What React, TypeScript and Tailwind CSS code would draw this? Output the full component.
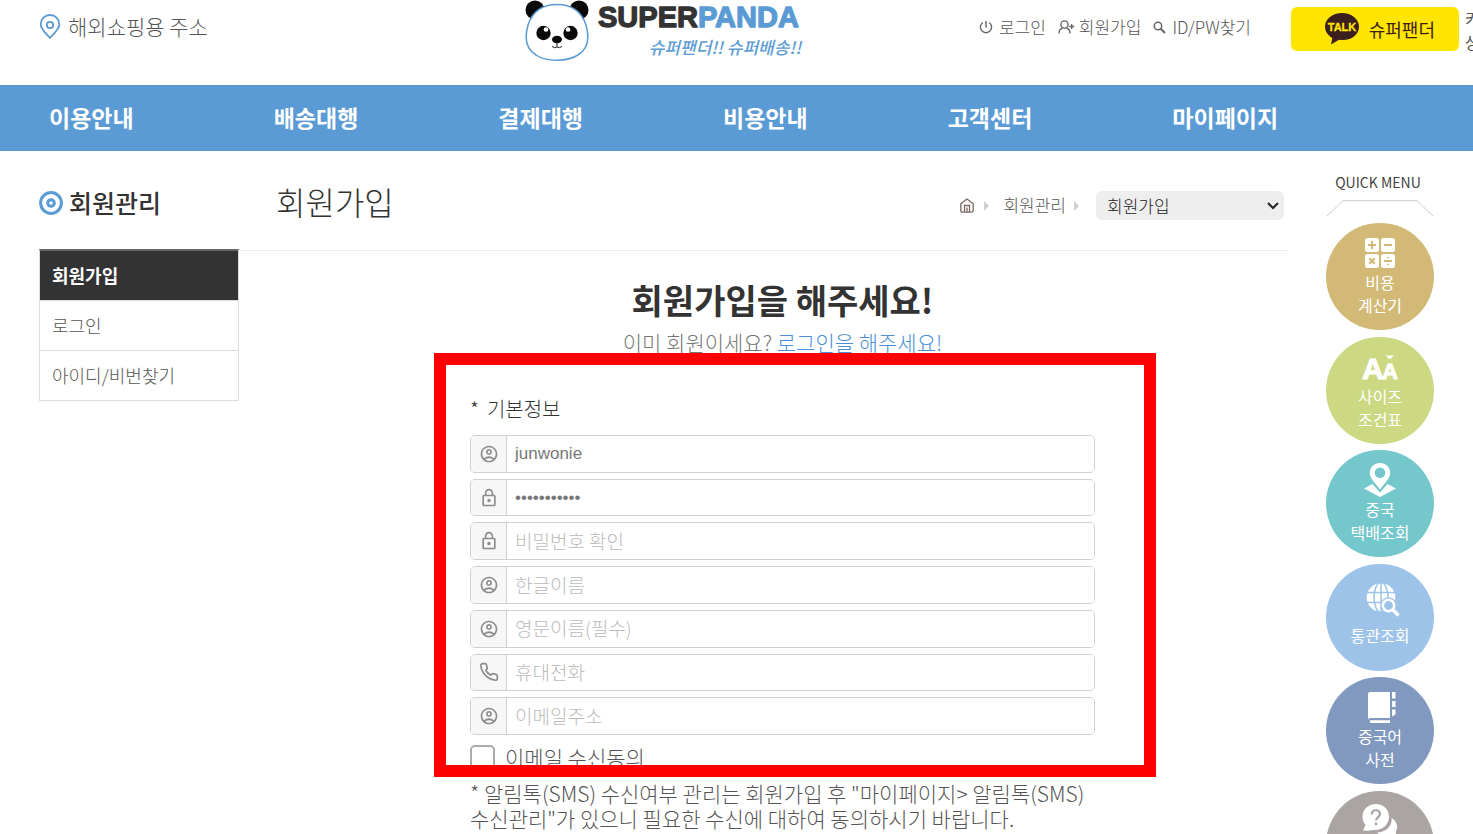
import type { ReactNode } from "react";
import { MdLockOutline, MdOutlineAccountCircle } from "react-icons/md";
import { FiPhone } from "react-icons/fi";

const navItems = ["이용안내", "배송대행", "결제대행", "비용안내", "고객센터", "마이페이지"];

type Field = {
  id: string;
  label: string;
  icon: "user" | "lock" | "phone";
  type: string;
  value?: string;
};

const fields: Field[] = [
  { id: "userid", label: "아이디", icon: "user", type: "text", value: "junwonie" },
  { id: "password", label: "비밀번호", icon: "lock", type: "password", value: "abcdefghijk" },
  { id: "password2", label: "비밀번호 확인", icon: "lock", type: "password" },
  { id: "name-ko", label: "한글이름", icon: "user", type: "text" },
  { id: "name-en", label: "영문이름(필수)", icon: "user", type: "text" },
  { id: "phone", label: "휴대전화", icon: "phone", type: "tel" },
  { id: "email", label: "이메일주소", icon: "user", type: "email" },
];

function PandaLogo() {
  return (
    <svg width="278" height="62" viewBox="0 0 278 62" role="img" aria-label="SUPERPANDA">
      <circle cx="10" cy="10" r="9.5" fill="#0a0a0a" />
      <circle cx="54" cy="10" r="9.5" fill="#0a0a0a" />
      <path
        d="M32 4.500C48 4.500 57 13 61 25C65 39 63 49 53 55C42 62 21 62 11 55C1 49-1 39 3 25C7 13 16 4.500 32 4.500Z"
        fill="#fff"
        stroke="#5b9bd5"
        strokeWidth="1.500"
      />
      <circle cx="18.500" cy="33" r="7.200" fill="#0a0a0a" />
      <circle cx="45.500" cy="33" r="7.200" fill="#0a0a0a" />
      <circle cx="21" cy="29.500" r="2.300" fill="#fff" />
      <circle cx="43" cy="29.500" r="2.300" fill="#fff" />
      <ellipse cx="32" cy="39.500" rx="5" ry="3.800" fill="#0a0a0a" />
      <path d="M32 43V47M27 46.500Q29.500 48.500 32 47Q34.500 48.500 37 46.500" fill="none" stroke="#222" strokeWidth="1" />
      <g
        fontFamily="Liberation Sans, sans-serif"
        fontWeight="700"
        fontSize="29"
        strokeWidth="1.300"
        strokeLinejoin="round"
      >
        <text x="73" y="27">
          <tspan fill="#333" stroke="#333">SUPER</tspan>
          <tspan fill="#5b9bd5" stroke="#5b9bd5">PANDA</tspan>
        </text>
      </g>
      <text
        x="276"
        y="54"
        textAnchor="end"
        fontFamily="Noto Sans CJK KR, sans-serif"
        fontSize="17"
        fontWeight="500"
        fontStyle="italic"
        fill="#5b9bd5"
      >
        슈퍼팬더!! 슈퍼배송!!
      </text>
    </svg>
  );
}

function PinIcon() {
  return (
    <svg width="22" height="26" viewBox="0 0 22 26" fill="none" stroke="#5b9bd5" strokeWidth="1.800">
      <path d="M11 24C8 20.500 1.700 15.500 1.700 10.300A9.300 9.300 0 0 1 20.300 10.300C20.300 15.500 14 20.500 11 24Z" strokeLinejoin="round" />
      <circle cx="11" cy="11" r="3.200" />
    </svg>
  );
}

function PowerIcon() {
  return (
    <svg width="14" height="14" viewBox="0 0 14 14" fill="none" stroke="#666" strokeWidth="1.400">
      <path d="M3.800 2.500A5.600 5.600 0 1 0 10.200 2.500M7 1V7.500" />
    </svg>
  );
}

function UserPlusIcon() {
  return (
    <svg width="17" height="14" viewBox="0 0 17 14" fill="none" stroke="#666" strokeWidth="1.400">
      <circle cx="6.500" cy="4.500" r="3.600" />
      <path d="M1 13.500C1 10.500 2.500 8.800 4.500 8.200M8.500 8.200C10.500 8.800 12 10.500 12 13.500M11.200 6.500H16.200M13.700 4V9" />
    </svg>
  );
}

function SearchIcon() {
  return (
    <svg width="13" height="13" viewBox="0 0 13 13" fill="none" stroke="#666">
      <circle cx="5" cy="5" r="3.700" strokeWidth="1.500" />
      <path d="M7.700 7.700L12 12" strokeWidth="2" />
    </svg>
  );
}

function TalkIcon() {
  return (
    <svg width="34" height="32" viewBox="0 0 34 32">
      <path
        d="M17 0C7.600 0 0 5.900 0 13.500C0 18.400 3 22.500 7.300 25L6 31.500L14 26.800C26 28.500 34 21.700 34 13.500C34 5.900 26.400 0 17 0Z"
        fill="#3b1e1e"
      />
      <text
        x="17"
        y="18"
        textAnchor="middle"
        fontFamily="Liberation Sans, sans-serif"
        fontSize="11"
        fontWeight="700"
        fill="#ffe500"
        stroke="#ffe500"
        strokeWidth="0.300"
      >
        TALK
      </text>
    </svg>
  );
}

function TargetIcon() {
  return (
    <svg width="24" height="24" viewBox="0 0 24 24" fill="none" stroke="#5b9bd5" strokeWidth="3">
      <circle cx="12" cy="12" r="10.400" />
      <circle cx="12" cy="12" r="3.300" />
    </svg>
  );
}

function HomeIcon() {
  return (
    <svg width="14" height="15" viewBox="0 0 14 15" fill="none" stroke="#7a6a62" strokeWidth="1.300">
      <path d="M.8 5.800L7 1L13.200 5.800V12.500Q13.200 14.200 11.500 14.200H2.500Q.8 14.200 .8 12.500Z" strokeLinejoin="round" />
      <path d="M4.500 14V7.500H9.500V14M7 9.500V14" />
    </svg>
  );
}

function Arrow() {
  return (
    <svg width="5" height="10" viewBox="0 0 5 10" fill="#d0d0d0">
      <path d="M0 0L5 5L0 10Z" />
    </svg>
  );
}

function CalcIcon() {
  return (
    <svg width="30" height="30" viewBox="0 0 30 30">
      <g fill="#fff">
        <rect width="14" height="14" rx="2.500" />
        <rect x="16" width="14" height="14" rx="2.500" />
        <rect y="16" width="14" height="14" rx="2.500" />
        <rect x="16" y="16" width="14" height="14" rx="2.500" />
      </g>
      <g stroke="#d2ba76" strokeWidth="2" fill="#d2ba76">
        <path d="M3 7H11M7 3V11M19 7H27M4.200 20.200L9.800 25.800M9.800 20.200L4.200 25.800M19 23H27" />
        <circle cx="23" cy="19.700" r=".5" strokeWidth="1" />
        <circle cx="23" cy="26.300" r=".5" strokeWidth="1" />
      </g>
    </svg>
  );
}

function SizeIcon() {
  return (
    <svg width="36" height="28" viewBox="0 0 36 28" fill="#fff">
      <g fontFamily="Liberation Sans, sans-serif" fontWeight="700" stroke="#fff" strokeWidth="1">
        <text x="0" y="26" fontSize="30">A</text>
        <text x="20" y="26" fontSize="22">A</text>
      </g>
      <path d="M23.500 2.500H32L27.700 6.500Z" />
    </svg>
  );
}

function TrackIcon() {
  return (
    <svg width="32" height="34" viewBox="0 0 32 34" fill="#fff">
      <path d="M8.500 21L0 25.500L16 34L32 25.500L23.500 21L16 29.500Z" />
      <path
        fillRule="evenodd"
        d="M16 0C10.200 0 5.800 4.300 5.800 9.800C5.800 15.500 11.500 20.500 16 26.500C20.500 20.500 26.200 15.500 26.200 9.800C26.200 4.300 21.800 0 16 0ZM16 4.500A5.300 5.300 0 1 1 16 15.100A5.300 5.300 0 0 1 16 4.500Z"
      />
    </svg>
  );
}

function GlobeIcon() {
  return (
    <svg width="28" height="34" viewBox="0 0 28 34" fill="none" overflow="visible">
      <circle cx="15" cy="14.500" r="14.300" fill="#fff" />
      <g stroke="#9dc3e8" strokeWidth="1.500">
        <path d="M0 9.500H30M0 19.500H30M15 0V29" />
        <ellipse cx="15" cy="14.500" rx="7" ry="15" />
      </g>
      <circle cx="22.500" cy="22.500" r="8.300" fill="#9dc3e8" />
      <circle cx="22.500" cy="22.500" r="5.700" stroke="#fff" strokeWidth="2.600" />
      <path d="M26.800 26.800L32.500 32.500" stroke="#fff" strokeWidth="3.500" />
    </svg>
  );
}

function BookIcon() {
  return (
    <svg width="24" height="31" viewBox="0 0 24 31" fill="#fff" overflow="visible">
      <path d="M2 0H22V26H3Q0 26 0 28V2Q0 0 2 0Z" />
      <path d="M2 28.300H22V31H3Q1 31 2 28.300ZM24 0H27.500V6.500H24ZM24 9H27.500V15H24ZM24 17.500H27.500V22.500L24 24.500Z" />
    </svg>
  );
}

function QuestionIcon() {
  return (
    <svg width="36" height="34" viewBox="0 0 36 34" fill="#fff">
      <path d="M14 0C6 0 .5 5.500 .5 13C.5 16.500 2 19.500 3.500 21L1 26.500Q8 27 11 26C20 27 27 20.500 27 13C27 5.500 21.500 0 14 0Z" />
      <path d="M29.500 14C30.500 21 25 28 15 28.500C19 33 26 34 29 32.500L35.500 33.500L33.500 28C36.500 23.500 35.500 17.500 29.500 14Z" />
      <path d="M9.800 10.500C9.800 4.800 18 5 18 10C18 13 14 13.200 14 16.500" fill="none" stroke="#aaa5a2" strokeWidth="2.200" />
      <circle cx="14" cy="20" r="1.400" fill="#aaa5a2" />
    </svg>
  );
}

type Quick = { lines: string[]; color: string; icon: ReactNode };

const quickMenu: Quick[] = [
  { lines: ["비용", "계산기"], color: "bg-[#d2ba76]", icon: <CalcIcon /> },
  { lines: ["사이즈", "조건표"], color: "bg-[#ccd882]", icon: <SizeIcon /> },
  { lines: ["중국", "택배조회"], color: "bg-[#74c7ca]", icon: <TrackIcon /> },
  { lines: ["통관조회"], color: "bg-[#9dc3e8]", icon: <GlobeIcon /> },
  { lines: ["중국어", "사전"], color: "bg-[#8199bf]", icon: <BookIcon /> },
  { lines: [], color: "bg-[#aaa5a2]", icon: <QuestionIcon /> },
];

function FieldIcon({ kind }: { kind: Field["icon"] }) {
  if (kind === "lock") return <MdLockOutline size={20} />;
  if (kind === "phone") return <FiPhone size={20} />;
  return <MdOutlineAccountCircle size={20} />;
}

export default function App() {
  return (
    <div className="h-screen overflow-hidden bg-white font-['Noto_Sans_CJK_KR',sans-serif] font-light text-[#555]">
      <header className="flex h-[85px] items-start pl-[39px]">
        <div className="grid flex-1 grid-cols-[1fr_auto_1fr] items-start">
          <a href="#address" className="flex h-[54px] items-center gap-[7px] text-[21px]">
            <PinIcon />
            해외쇼핑용 주소
          </a>
          <a href="#home">
            <PandaLogo />
          </a>
          <div className="flex h-[54px] items-center justify-end gap-3 pr-[37px] text-[17px]">
            <a href="#login" className="flex items-center gap-1.5">
              <PowerIcon />
              로그인
            </a>
            <a href="#join" className="flex items-center gap-1">
              <UserPlusIcon />
              회원가입
            </a>
            <a href="#find" className="flex items-center gap-1.5">
              <SearchIcon />
              ID/PW찾기
            </a>
          </div>
        </div>
        <a
          href="#talk"
          className="mt-[7px] ml-[3px] flex h-11 w-[168px] items-center justify-end gap-2.5 rounded-md bg-[#ffe500] pr-6 text-lg font-normal text-[#3b1e1e]"
        >
          <TalkIcon />
          슈퍼팬더
        </a>
        <p className="mt-1.5 ml-1.5 w-2 overflow-hidden text-base leading-6 font-normal whitespace-nowrap">
          카
          <br />
          상
        </p>
      </header>

      <nav className="grid h-[66px] grid-cols-6 items-center bg-[#5b9bd5] pr-[86px] pb-0.5 pl-[39px] text-[23px] font-bold text-white">
        {navItems.map((item) => (
          <a key={item} href="#menu" className="pl-2.5">
            {item}
          </a>
        ))}
      </nav>

      <div className="grid grid-cols-[200px_1fr_108px] gap-x-[38px] px-[39px]">
        <aside>
          <h2 className="flex h-[98px] items-center gap-1.5 pt-1.5 text-[25px] font-medium text-[#333]">
            <TargetIcon />
            회원관리
          </h2>
          <ul className="border-x border-t-2 border-x-[#ddd] border-t-[#666] text-lg">
            <li className="flex h-[50px] items-center border-b border-[#ddd] bg-[#333] pb-0.5 pl-3 font-bold text-white">
              <a href="#join">회원가입</a>
            </li>
            <li className="flex h-[50px] items-center border-b border-[#ddd] pb-0.5 pl-3">
              <a href="#login">로그인</a>
            </li>
            <li className="flex h-[50px] items-center border-b border-[#ddd] pb-0.5 pl-3">
              <a href="#find">아이디/비번찾기</a>
            </li>
          </ul>
        </aside>

        <main>
          <div className="-ml-[38px] flex h-[100px] items-center justify-between border-b border-[#eee] pt-2.5 pr-1 pl-[37px]">
            <h1 className="pb-2.5 text-[32px] text-[#333]">회원가입</h1>
            <div className="flex items-center text-[17px]">
              <a href="#home" aria-label="홈" className="mr-2.5">
                <HomeIcon />
              </a>
              <Arrow />
              <a href="#member" className="mr-2 ml-3.5 pb-0.5">
                회원관리
              </a>
              <Arrow />
              <div className="relative ml-[17px]">
                <select
                  aria-label="회원관리 메뉴"
                  className="block h-[29px] w-[188px] appearance-none rounded-md bg-[#eee] pl-[11px] text-[#222]"
                >
                  <option>회원가입</option>
                </select>
                <svg
                  className="pointer-events-none absolute top-[11px] right-[5px]"
                  width="12"
                  height="8"
                  viewBox="0 0 12 8"
                  fill="none"
                  stroke="#222"
                  strokeWidth="2"
                >
                  <path d="M1 1L6 6L11 1" />
                </svg>
              </div>
            </div>
          </div>

          <form className="relative mx-auto mt-[29px] w-[625px]">
            <h2 className="text-center text-[34px] leading-10 font-bold text-[#333]">회원가입을 해주세요!</h2>
            <p className="mt-2 text-center text-[21px] leading-7 text-[#777]">
              이미 회원이세요?{" "}
              <a href="#login" className="text-[#4a90d2]">
                로그인을 해주세요!
              </a>
            </p>
            <h3 className="mt-[39px] mb-3 flex gap-2 text-xl leading-7 text-[#333]">
              <span>*</span>
              <span>기본정보</span>
            </h3>
            <div className="grid h-[300px] grid-rows-7 gap-1.5">
              {fields.map((f) => (
                <div key={f.id} className="flex overflow-hidden rounded-[5px] border border-[#d0d0d0]">
                  <label
                    htmlFor={f.id}
                    aria-label={f.label}
                    className="flex w-9 shrink-0 items-center justify-center border-r border-[#d0d0d0] bg-[#f7f7f7] text-[#8c8c8c]"
                  >
                    <FieldIcon kind={f.icon} />
                  </label>
                  <input
                    id={f.id}
                    type={f.type}
                    defaultValue={f.value}
                    placeholder={f.value ? undefined : f.label}
                    className={`min-w-0 flex-1 bg-white px-2 text-[#777] outline-none placeholder:text-[#bbb] ${
                      f.value ? "font-['Liberation_Sans',sans-serif] text-[17px] font-normal" : "text-[19px]"
                    }`}
                  />
                </div>
              ))}
            </div>
            <label className="mt-2.5 flex items-center gap-2.5 text-[21px] leading-[25px]">
              <input type="checkbox" className="size-[25px] appearance-none rounded-[5px] border-2 border-[#aaa]" />
              이메일 수신동의
            </label>
            <p className="mt-[11px] text-[21px] leading-[25px] whitespace-nowrap">
              * 알림톡(SMS) 수신여부 관리는 회원가입 후 "마이페이지&gt; 알림톡(SMS)
              <br />
              수신관리"가 있으니 필요한 수신에 대하여 동의하시기 바랍니다.
            </p>
            <div className="pointer-events-none absolute top-[73px] -right-[61px] -left-[36px] h-[424px] border-[12px] border-[#ff0000]" />
          </form>
        </main>

        <aside className="pt-5">
          <p className="pr-1 text-center text-sm leading-[22px] font-normal text-[#444]">QUICK MENU</p>
          <svg className="mt-[7px] mb-1.5 block w-full" height="17" viewBox="0 0 108 17" fill="none" stroke="#ccc">
            <path d="M1 16L17 .7H91L107 16" />
          </svg>
          <ul className="flex h-[675px] flex-col justify-between text-base leading-[23px] font-normal text-white">
            {quickMenu.map((q) => (
              <li key={q.color} className="h-[107px]">
                <a
                  href="#quick"
                  className={`flex h-full flex-col items-center rounded-full text-center ${q.color} ${
                    q.lines.length === 1 ? "pt-[19px]" : "pt-3"
                  }`}
                >
                  <span className={`flex items-center ${q.lines.length === 1 ? "mb-1.5 h-[35px]" : "h-9"}`}>{q.icon}</span>
                  {q.lines.map((line) => (
                    <span key={line}>{line}</span>
                  ))}
                </a>
              </li>
            ))}
          </ul>
        </aside>
      </div>
    </div>
  );
}
